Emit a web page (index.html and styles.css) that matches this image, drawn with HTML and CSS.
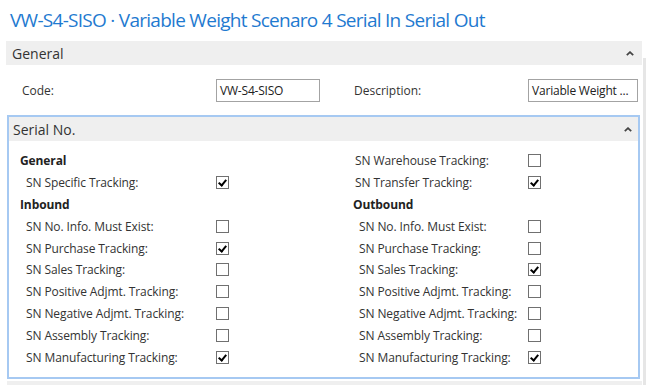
FILE: index.html
```html
<!DOCTYPE html>
<html><head><title>VW-S4-SISO</title><meta charset="utf-8">
<link rel="stylesheet" href="styles.css">
</head>
<body>
<div class="ventana">
  <div class="contenido">
    <h1 class="titulo">VW-S4-SISO · Variable Weight Scenaro 4 Serial In Serial Out</h1>

    <div class="seccion">
      <div class="cabecera"><span>General</span>
        <svg class="plegar" width="8" height="5" viewBox="0 0 8 5"><polyline points="0.8,4.2 4,1.2 7.2,4.2" fill="none" stroke="#444" stroke-width="1.8"/></svg>
      </div>
      <div class="campos">
        <label class="etiqueta">Code:</label><div class="caja cajaCodigo">VW-S4-SISO</div>
        <label class="etiqueta etiquetaDesc">Description:</label><div class="caja cajaDesc">Variable Weight ...</div>
      </div>
    </div>

    <div class="seccion activa">
      <div class="cabecera"><span>Serial No.</span>
        <svg class="plegar" width="8" height="5" viewBox="0 0 8 5"><polyline points="0.8,4.2 4,1.2 7.2,4.2" fill="none" stroke="#444" stroke-width="1.8"/></svg>
      </div>
      <div class="columnas">
        <div class="columna izq">
          <div class="grupo">General</div>
          <div class="fila"><span>SN Specific Tracking:</span><i class="check si"></i></div>
          <div class="grupo">Inbound</div>
          <div class="fila"><span>SN No. Info. Must Exist:</span><i class="check"></i></div>
          <div class="fila"><span>SN Purchase Tracking:</span><i class="check si"></i></div>
          <div class="fila"><span>SN Sales Tracking:</span><i class="check"></i></div>
          <div class="fila"><span>SN Positive Adjmt. Tracking:</span><i class="check"></i></div>
          <div class="fila"><span>SN Negative Adjmt. Tracking:</span><i class="check"></i></div>
          <div class="fila"><span>SN Assembly Tracking:</span><i class="check"></i></div>
          <div class="fila"><span>SN Manufacturing Tracking:</span><i class="check si"></i></div>
        </div>
        <div class="columna der">
          <div class="fila alta"><span>SN Warehouse Tracking:</span><i class="check"></i></div>
          <div class="fila alta"><span>SN Transfer Tracking:</span><i class="check si"></i></div>
          <div class="grupo">Outbound</div>
          <div class="fila"><span>SN No. Info. Must Exist:</span><i class="check"></i></div>
          <div class="fila"><span>SN Purchase Tracking:</span><i class="check"></i></div>
          <div class="fila"><span>SN Sales Tracking:</span><i class="check si"></i></div>
          <div class="fila"><span>SN Positive Adjmt. Tracking:</span><i class="check"></i></div>
          <div class="fila"><span>SN Negative Adjmt. Tracking:</span><i class="check"></i></div>
          <div class="fila"><span>SN Assembly Tracking:</span><i class="check"></i></div>
          <div class="fila"><span>SN Manufacturing Tracking:</span><i class="check si"></i></div>
        </div>
      </div>
    </div>

    <div class="seccion siguiente"><div class="cabecera"></div></div>
  </div>
  <div class="barra"></div>
</div>
</body>
</html>
```

FILE: styles.css
```css
body {margin:0; font-family:"Open Sans", "Noto Sans", sans-serif; font-size:12px; color:#222; background:#fff; overflow:hidden;}
.ventana {display:flex; height:385px; overflow:hidden;}
.contenido {flex:1; min-width:0;}
.barra {width:3px; margin-top:58px; background:#e6e6e6;}

.titulo {margin:0; height:41px; padding:6px 0 0 10px; box-sizing:border-box; font-weight:normal; font-size:19px; line-height:28px; color:#1f7ad0; letter-spacing:-0.72px; white-space:nowrap;}

.seccion {margin-left:6px; margin-right:1px;}
.cabecera {height:24px; background:#efefef; display:flex; align-items:center; justify-content:space-between; padding:0 8px 0 6px; font-size:14px; color:#333;}
.plegar {display:block;}

.campos {display:flex; align-items:center; height:50px;}
.etiqueta {width:210px; padding-left:16px; box-sizing:border-box; color:#333;}
.etiquetaDesc {width:208px; padding-left:34px;}
.caja {height:23px; box-sizing:border-box; border:1px solid #a3a3a3; padding:0 3px; line-height:21px; color:#222; white-space:nowrap; letter-spacing:-0.2px;}
.cajaCodigo {width:104px;}
.cajaDesc {width:110px;}

.activa {margin-left:7px; margin-right:3px; border:2px solid #a6c9f2;}
.activa .cabecera {padding-left:4px; padding-right:6px;}
.columnas {display:flex; box-sizing:border-box; height:236px; padding:9px 0 9px 11px; letter-spacing:-0.1px;}
.columna {display:flex; flex-direction:column;}
.izq {width:333px;}
.grupo {height:21.8px; line-height:21.8px; font-weight:bold; color:#222;}
.fila {height:21.8px; display:flex; align-items:center; color:#333;}
.fila span {box-sizing:border-box; padding-left:6px;}
.izq .fila span {width:196px;}
.der .fila span {width:175px;}
.der .fila.alta span {padding-left:2px;}
.check {display:block; width:13px; height:13px; box-sizing:border-box; border:1px solid #707070; background:#fff; position:relative;}
.check.si::after {content:""; position:absolute; left:3px; top:1px; width:3px; height:6px; border:solid #000; border-width:0 2px 2px 0; transform:rotate(40deg);}

.siguiente {margin-top:2px; margin-left:7px;}
```
